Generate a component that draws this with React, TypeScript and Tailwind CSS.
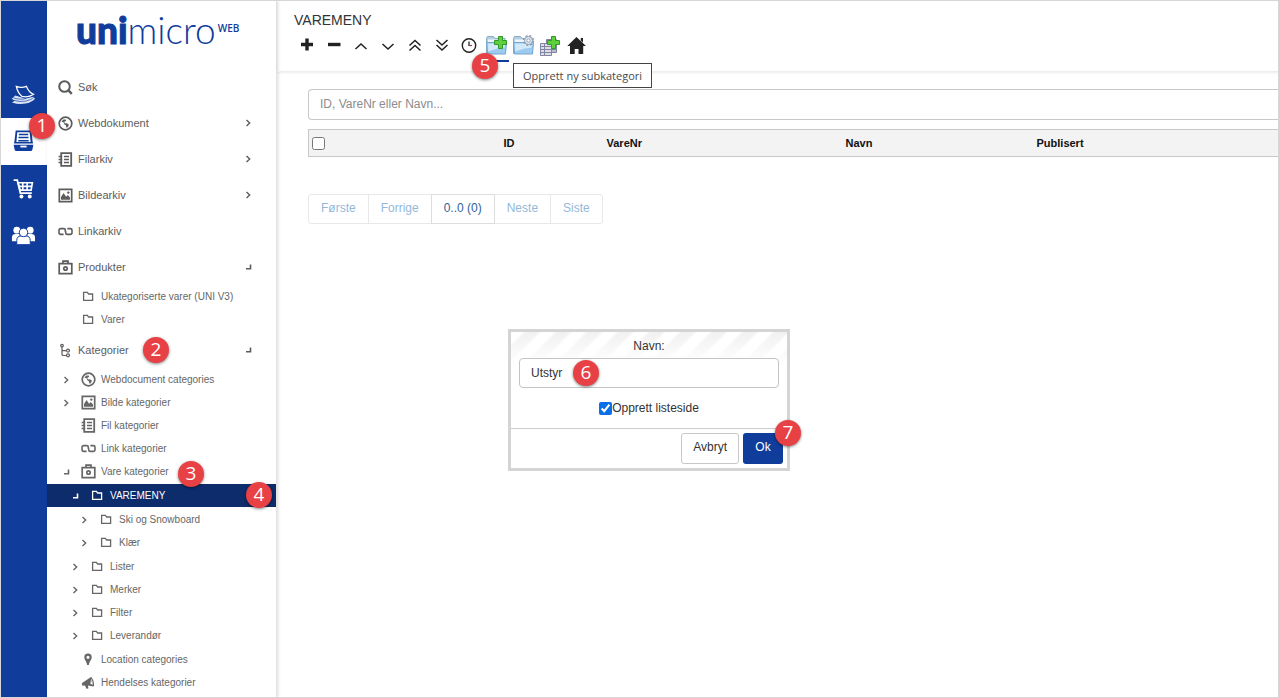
import type { ReactNode } from 'react';

type IconProps = { className?: string };

type TreeItem = {
  label: string;
  icon: (props: IconProps) => ReactNode;
  state?: 'open' | 'closed';
  selected?: boolean;
  children?: TreeItem[];
};

/* ---------- Icons ---------- */

const SearchIcon = ({ className }: IconProps) => (
  <svg viewBox="0 0 15 15" className={className} fill="none" stroke="currentColor" strokeWidth="2">
    <circle cx="6.5" cy="6.5" r="5.3" />
    <path d="M10.2 10.2l3.6 3.6" strokeWidth="2.4" />
  </svg>
);

const GlobeIcon = ({ className }: IconProps) => (
  <svg viewBox="0 0 15 15" className={className}>
    <circle cx="7.5" cy="7.5" r="6.3" fill="none" stroke="currentColor" strokeWidth="1.7" />
    <path d="M3.4 5.6L5.4 3.6l2.4 0 .3 1.3-1.500.6-.3 1.100 1.200.9 1.400-.2 1.900 1.200-.4 1.700-1.400 1.600-.8-.5-.2-1.800-1.700-1.200-.5-1.700-1.300-.5z" fill="currentColor" />
  </svg>
);

const NotebookIcon = ({ className }: IconProps) => (
  <svg viewBox="0 0 15 15" className={className} fill="none" stroke="currentColor">
    <path d="M3.2 1.2h10v12.6h-10z" strokeWidth="1.8" />
    <path d="M6 4.5h5M6 7.5h5M6 10.5h5" strokeWidth="1.5" />
    <path d="M.6 4.5h3.600M.6 7.5h3.600M.6 10.5h3.600" strokeWidth="1.4" />
  </svg>
);

const ImageIcon = ({ className }: IconProps) => (
  <svg viewBox="0 0 15 15" className={className}>
    <path d="M1.300 1.300h12.400v12.400H1.300z" fill="none" stroke="currentColor" strokeWidth="1.7" />
    <path d="M3 11.800V9l2.600-4 2.500 3.700 1.700-1.600L12 9.600v2.200z" fill="currentColor" />
    <circle cx="10.3" cy="4.6" r="1.2" fill="currentColor" />
  </svg>
);

const LinkIcon = ({ className }: IconProps) => (
  <svg viewBox="0 0 15 15" className={className} fill="none" stroke="currentColor" strokeWidth="1.6">
    <path d="M5.600 10.400H2.600A1.600 1.600 0 0 1 1 8.800V6.200A1.600 1.600 0 0 1 2.600 4.600h3.200a1.500 1.500 0 0 1 1.500 1.500v1.700" />
    <path d="M9.400 4.600h3A1.600 1.600 0 0 1 14 6.200v2.600a1.600 1.600 0 0 1-1.600 1.600H9.200a1.500 1.500 0 0 1-1.500-1.500V7.200" />
  </svg>
);

const ProductIcon = ({ className }: IconProps) => (
  <svg viewBox="0 0 15 15" className={className} fill="none" stroke="currentColor" strokeWidth="1.7">
    <path d="M1.200 3.600h12.600v10H1.200z" />
    <path d="M5 3.400V1.200h5v2.200" />
    <circle cx="7.5" cy="8.5" r="1.7" />
  </svg>
);

const BranchIcon = ({ className }: IconProps) => (
  <svg viewBox="0 0 15 15" className={className} fill="none" stroke="currentColor" strokeWidth="1.2">
    <circle cx="4" cy="2.6" r="1.3" />
    <path d="M4 4v7.200q0 1.300 1.300 1.300H8M4 7.600h4" />
    <circle cx="10" cy="7.6" r="1.5" />
    <circle cx="10" cy="12.3" r="1.5" />
  </svg>
);

const FolderIcon = ({ className }: IconProps) => (
  <svg viewBox="0 0 15 15" className={className} fill="none" stroke="currentColor" strokeWidth="1.3">
    <path d="M2.600 3.300h3.800l1.200 1.700h4v6.300h-9z" />
  </svg>
);

const PinIcon = ({ className }: IconProps) => (
  <svg viewBox="0 0 15 15" className={className}>
    <path fillRule="evenodd" fill="currentColor" d="M7 1.600a3.700 3.700 0 0 0-3.700 3.700c0 2.400 2.100 3.600 2.900 7.600h1.600c.8-4 2.900-5.200 2.900-7.600A3.700 3.700 0 0 0 7 1.600zm0 2.100a1.600 1.600 0 1 1 0 3.200 1.600 1.600 0 0 1 0-3.200z" />
  </svg>
);

const HornIcon = ({ className }: IconProps) => (
  <svg viewBox="0 0 15 15" className={className}>
    <path d="M.8 8.300L9.600 2.200l2.600 9.400-5.200-1 .4 3-2 .2L4 10.600l-2.600.2z" fill="currentColor" />
    <path d="M9.800 2.200q2.800 3.400 2.800 9" fill="none" stroke="currentColor" strokeWidth="1.1" />
    <path d="M10 4.600l1.400 4.800-2-.6z" fill="#fff" />
  </svg>
);

const Chevron = ({ state, className }: { state: 'open' | 'closed'; className?: string }) => (
  <svg viewBox="0 0 10 10" className={className} fill="none" stroke="currentColor">
    {state === 'open' ? (
      <path d="M7.500 2.500v4.300H3" strokeWidth="1.6" />
    ) : (
      <path d="M3.500 2l3.200 3-3.200 3" strokeWidth="1.4" />
    )}
  </svg>
);

const PapersIcon = ({ className }: IconProps) => (
  <svg viewBox="0 0 26 24" className={className}>
    <path d="M4.500 13L.8 16.500l3 2-2.800 1.700q7 2.500 14 1.200 6.500-1 10-5l-2-2-8 2z" fill="#dbe4f6" />
    <path d="M2.500 18q7 2.200 13 .8t8-3.600M2.500 15.500q8 2.500 13 .5" fill="none" stroke="#103c9b" strokeWidth=".7" />
    <path d="M5.500 3.600Q11 5.600 16 3.500q2.500 6.500 7.500 8.300-5 3.600-12 2.200-4.500-3.500-6-10.400z" fill="#103c9b" stroke="#fff" strokeWidth="1.3" />
  </svg>
);

const DrawerIcon = ({ className }: IconProps) => (
  <svg viewBox="0 0 24 24" className={className} fill="#103c9b">
    <path d="M4.500 1.500h15l1.300 11h-2L18 3H6L5.200 12.500h-2z" />
    <path d="M7.500 4.500h9v1.400h-9zM7.200 7.500h9.600v1.400H7.200zM7 10.500h10v1.400H7z" />
    <path d="M3 12.500h18v1.500H3zM2.500 15h19l-1 5q-.2 1-1.200 1H4.700q-1 0-1.200-1z" />
    <path d="M9 16h6v1.700H9z" fill="#fff" />
  </svg>
);

const CartIcon = ({ className }: IconProps) => (
  <svg viewBox="0 0 24 24" className={className} fill="none" stroke="#fff">
    <path d="M2.500 4H6l3 12.500h11" strokeWidth="1.7" />
    <path d="M6.800 6.500H20.500l-1.200 7H8.700z" strokeWidth="1.6" />
    <path d="M11.300 6v8M15.500 6v8M7 10h13" strokeWidth="1.6" />
    <circle cx="10" cy="19.6" r="1.900" fill="#fff" stroke="none" />
    <circle cx="18" cy="19.6" r="1.900" fill="#fff" stroke="none" />
  </svg>
);

const PeopleIcon = ({ className }: IconProps) => (
  <svg viewBox="0 0 26 24" className={className} fill="#fff">
    <circle cx="6" cy="6.5" r="3.5" />
    <circle cx="20" cy="6.5" r="3.5" />
    <path d="M1 18v-4q0-3.600 4-3.600h4V18zM25 18v-4q0-3.600-4-3.600h-4V18z" />
    <g stroke="#103c9b" strokeWidth="1">
      <path d="M6 21.500v-4.200Q6 12.500 10.500 12.500h5q4.500 0 4.500 4.800v4.200z" />
      <circle cx="13" cy="8.8" r="4.4" />
    </g>
  </svg>
);

const GreenPlus = ({ x, y }: { x: number; y: number }) => (
  <path
    transform={`translate(${x} ${y})`}
    d="M4.500 .5h4v4h4v4h-4v4h-4v-4h-4v-4h4z"
    fill="#5fd03c"
    stroke="#2f9a2a"
    strokeWidth="1"
  />
);

const BlueFolder = () => (
  <>
    <path d="M1.500 19.500v-15l1-2h6l1.500 2h10v15z" fill="#b4cfe2" stroke="#8aabc5" />
    <path d="M3 5.500h16v4H3z" fill="#eff6fb" stroke="none" />
    <path d="M1.500 8.500h20l-1 11.500h-18z" fill="#9dcbf0" stroke="#74a6cf" />
    <path d="M3 9.500h17l-.3 4q-8 .5-16.500 4z" fill="#d2e9fa" stroke="none" />
  </>
);

/* ---------- Data ---------- */

const menuItems: TreeItem[] = [
  { label: 'Webdokument', icon: GlobeIcon, state: 'closed' },
  { label: 'Filarkiv', icon: NotebookIcon, state: 'closed' },
  { label: 'Bildearkiv', icon: ImageIcon, state: 'closed' },
  { label: 'Linkarkiv', icon: LinkIcon },
  {
    label: 'Produkter',
    icon: ProductIcon,
    state: 'open',
    children: [
      { label: 'Ukategoriserte varer (UNI V3)', icon: FolderIcon },
      { label: 'Varer', icon: FolderIcon },
    ],
  },
  {
    label: 'Kategorier',
    icon: BranchIcon,
    state: 'open',
    children: [
      { label: 'Webdocument categories', icon: GlobeIcon, state: 'closed' },
      { label: 'Bilde kategorier', icon: ImageIcon, state: 'closed' },
      { label: 'Fil kategorier', icon: NotebookIcon },
      { label: 'Link kategorier', icon: LinkIcon },
      {
        label: 'Vare kategorier',
        icon: ProductIcon,
        state: 'open',
        children: [
          {
            label: 'VAREMENY',
            icon: FolderIcon,
            state: 'open',
            selected: true,
            children: [
              { label: 'Ski og Snowboard', icon: FolderIcon, state: 'closed' },
              { label: 'Klær', icon: FolderIcon, state: 'closed' },
            ],
          },
          { label: 'Lister', icon: FolderIcon, state: 'closed' },
          { label: 'Merker', icon: FolderIcon, state: 'closed' },
          { label: 'Filter', icon: FolderIcon, state: 'closed' },
          { label: 'Leverandør', icon: FolderIcon, state: 'closed' },
        ],
      },
      { label: 'Location categories', icon: PinIcon },
      { label: 'Hendelses kategorier', icon: HornIcon },
    ],
  },
];

const railItems = [
  { label: 'Dokumenter', icon: PapersIcon },
  { label: 'Arkiv', icon: DrawerIcon, active: true },
  { label: 'Nettbutikk', icon: CartIcon },
  { label: 'Brukere', icon: PeopleIcon },
];

const toolbar: { label: string; active?: boolean; drawing: ReactNode }[] = [
  { label: 'Ny', drawing: <path d="M11 4.500v12M5 10.500h12" strokeWidth="3.4" /> },
  { label: 'Slett', drawing: <path d="M5 10.500h12.500" strokeWidth="3.4" /> },
  { label: 'Opp', drawing: <path d="M5.500 15l5.500-5 5.500 5" strokeWidth="1.5" /> },
  { label: 'Ned', drawing: <path d="M5.500 10l5.500 5 5.500-5" strokeWidth="1.5" /> },
  { label: 'Øverst', drawing: <path d="M5.500 11.500l5.500-5 5.500 5M5.500 16.500l5.500-5 5.500 5" strokeWidth="1.5" /> },
  { label: 'Nederst', drawing: <path d="M5.500 6l5.500 5 5.500-5M5.500 11l5.500 5 5.500-5" strokeWidth="1.5" /> },
  {
    label: 'Historikk',
    drawing: (
      <>
        <circle cx="11" cy="11.5" r="6.7" strokeWidth="1.4" />
        <path d="M11 7.500V12" strokeWidth="1.3" />
        <path d="M11 11.500h3" stroke="#a33b45" strokeWidth="1.2" />
      </>
    ),
  },
  {
    label: 'Opprett ny subkategori',
    active: true,
    drawing: (
      <>
        <BlueFolder />
        <GreenPlus x={9} y={2} />
      </>
    ),
  },
  {
    label: 'Innstillinger',
    drawing: (
      <>
        <BlueFolder />
        <circle cx="16.5" cy="6.5" r="4.8" stroke="#8d9cae" strokeWidth="1.6" strokeDasharray="2 1.800" />
        <circle cx="16.5" cy="6.5" r="4" fill="#e4eaf0" stroke="#8d9cae" strokeWidth="1" />
        <circle cx="16.5" cy="6.5" r="1.7" fill="#fff" stroke="#8fa2b6" strokeWidth="1" />
      </>
    ),
  },
  {
    label: 'Legg til flere',
    drawing: (
      <>
        <path d="M7.500 5.500h10v13h-10z" fill="#b9bccb" stroke="#8085a0" />
        <path d="M1.500 9.500h11v12h-11z" fill="#dcdde8" stroke="#8085a0" />
        <path d="M1.500 12.500h11M1.500 15.500h11M1.500 18.500h11M5.500 9.500v12M13 15.500h4.500" stroke="#8085a0" />
        <GreenPlus x={8} y={2} />
      </>
    ),
  },
  {
    label: 'Hjem',
    drawing: <path d="M10.500 3L20 12h-2.800v8h-4.700v-5H8.700v5H4v-8H1.300zM14.800 4h2.200v4.500l-2.200-2z" fill="#222" stroke="none" />,
  },
];

const badges = [
  { n: 1, pos: 'left-[28px] top-[112px]' },
  { n: 2, pos: 'left-[142px] top-[336px]' },
  { n: 3, pos: 'left-[177px] top-[460px]' },
  { n: 4, pos: 'left-[245px] top-[481px]' },
  { n: 5, pos: 'left-[471px] top-[52px]' },
  { n: 6, pos: 'left-[572px] top-[359px]' },
  { n: 7, pos: 'left-[774px] top-[419px]' },
];

const pages = ['Første', 'Forrige', '0..0 (0)', 'Neste', 'Siste'];

const depthPadding = ['pl-[14px]', 'pl-[23px]', 'pl-8'];

/* ---------- Parts ---------- */

function Tree({ items, depth = 0 }: { items: TreeItem[]; depth?: number }) {
  return (
    <ul className={depth === 0 ? 'pb-px' : 'py-px'}>
      {items.map(({ label, icon: Icon, state, selected, children }) => (
        <li key={label}>
          <a
            href="#"
            className={`flex h-[23px] items-center text-[10px] ${depthPadding[depth]} ${
              selected ? 'bg-[#0d2c6c] text-white' : 'text-[#666]'
            }`}
          >
            <span className="mr-[10px] w-[10px]">
              {state && <Chevron state={state} className="size-[10px]" />}
            </span>
            <Icon className="mr-[5px] size-[15px]" />
            {label}
          </a>
          {children && <Tree items={children} depth={depth + 1} />}
        </li>
      ))}
    </ul>
  );
}

function Sidebar() {
  return (
    <nav className="w-[230px] shrink-0 border-r border-[#e4e4e4] shadow-[1px_0_3px_rgba(0,0,0,0.15)]">
      <div className="flex h-[68px] items-start pl-[29px] pt-[6px] font-['Lato'] text-[37px] leading-[46px] text-[#103c9b]">
        <span className="font-black [-webkit-text-stroke:1px_#103c9b]">uni</span>
        <span className="font-light">micro</span>
        <span className="pl-[2px] pt-[15px] font-['Open_Sans'] text-[10px] font-semibold leading-[12px]">WEB</span>
      </div>
      <label className="flex h-9 items-center gap-[5px] pl-[11px] text-[11px] text-[#5c5c5c]">
        <SearchIcon className="size-[15px]" />
        <input
          type="text"
          placeholder="Søk"
          className="w-40 bg-transparent outline-none placeholder:text-[#5c5c5c]"
        />
      </label>
      <ul>
        {menuItems.map(({ label, icon: Icon, state, children }) => (
          <li key={label}>
            <a href="#" className="flex h-9 items-center gap-[5px] pl-[11px] pr-[23px] text-[11px] text-[#5c5c5c]">
              <Icon className="size-[15px]" />
              <span className="grow">{label}</span>
              {state && <Chevron state={state} className="size-[10px]" />}
            </a>
            {children && <Tree items={children} />}
          </li>
        ))}
      </ul>
    </nav>
  );
}

function CreateDialog() {
  return (
    <form
      role="dialog"
      className="absolute left-[507px] top-[328px] w-[282px] border-[3px] border-[#d4d4d4] bg-white text-[12px] text-[#333]"
    >
      <div className="bg-[linear-gradient(to_bottom,transparent,#fff_32px),repeating-linear-gradient(135deg,#fff_0_8px,#f1f1f1_11px_19px,#fff_22px)] px-2">
        <label htmlFor="navn" className="block h-[26px] text-center leading-[28px]">
          Navn:
        </label>
        <input
          id="navn"
          type="text"
          defaultValue="Utstyr"
          className="block h-[30px] w-full rounded-[4px] border border-[#c4c4c4] bg-white px-[11px] outline-none"
        />
      </div>
      <div className="flex h-10 items-center justify-center">
        <input id="listeside" type="checkbox" defaultChecked className="size-[13px] accent-[#0b6fe8]" />
        <label htmlFor="listeside">Opprett listeside</label>
      </div>
      <div className="flex justify-end gap-1 border-t border-[#ccc] px-1 py-1">
        <button type="button" className="h-[31px] rounded-[3px] border border-[#c8c8c8] px-[11px] pb-1">
          Avbryt
        </button>
        <button type="submit" className="h-[31px] w-10 rounded-[3px] bg-[#103c9b] pb-1 text-white">
          Ok
        </button>
      </div>
    </form>
  );
}

export default function App() {
  return (
    <div className="relative flex min-h-screen overflow-hidden border border-[#d6d6d6] bg-white font-['Liberation_Sans',Arial,sans-serif]">
      {/* Module rail */}
      <div className="w-[46px] shrink-0 bg-[#103c9b] pt-[70px]">
        {railItems.map(({ label, icon: Icon, active }) => (
          <a
            key={label}
            href="#"
            aria-label={label}
            className={`flex h-[47px] items-center justify-center pr-[2px] ${active ? 'bg-white' : ''}`}
          >
            <Icon className="size-[25px]" />
          </a>
        ))}
      </div>

      <Sidebar />

      {/* Content */}
      <main className="min-w-0 grow">
        <header className="h-[71px] border-b border-[#eee] pl-[17px] pt-[10px] shadow-[0_1px_2px_rgba(0,0,0,0.08)]">
          <h1 className="text-[14px] leading-[18px] text-[#333]">VAREMENY</h1>
          <div className="-ml-px flex h-[33px]">
            {toolbar.map(({ label, active, drawing }) => (
              <button
                key={label}
                type="button"
                aria-label={label}
                className={`flex w-[27px] items-center justify-center border-b-2 ${
                  active ? 'border-[#103c9b]' : 'border-transparent'
                }`}
              >
                <svg viewBox="0 0 22 22" className="size-[22px]" fill="none" stroke="#222">
                  {drawing}
                </svg>
              </button>
            ))}
          </div>
        </header>

        <div className="pl-[31px] pt-[17px]">
          <input
            type="text"
            aria-label="Søk i varer"
            placeholder="ID, VareNr eller Navn..."
            className="block h-[31px] w-full rounded-l-[4px] border border-r-0 border-[#c8c8c8] px-[11px] pb-[2px] text-[12px] outline-none placeholder:text-[#8c8c8c]"
          />
          <table className="mt-[9px] w-full table-fixed border border-r-0 border-[#c8c8c8] bg-[#f3f3f3] text-left text-[11px] text-[#111]">
            <thead>
              <tr className="h-[27px]">
                <th className="w-[195px] pl-[3px]">
                  <input type="checkbox" aria-label="Velg alle" className="block size-[13px]" />
                </th>
                <th className="w-[103px]">ID</th>
                <th className="w-[239px]">VareNr</th>
                <th className="w-[191px]">Navn</th>
                <th>Publisert</th>
              </tr>
            </thead>
          </table>

          <div className="mt-[37px] flex text-[12px]">
            {pages.map((page) => (
              <button
                key={page}
                type="button"
                className={`-mr-px h-[30px] border px-3 pb-[2px] first:rounded-l-[3px] last:rounded-r-[3px] ${
                  page === '0..0 (0)'
                    ? 'relative border-[#ddd] text-[#2f6299]'
                    : 'border-[#e8e8e8] text-[#94b8da]'
                }`}
              >
                {page}
              </button>
            ))}
          </div>
        </div>
      </main>

      <div
        role="tooltip"
        className="absolute left-[512px] top-[62px] border border-[#444] bg-white px-[9px] font-['Open_Sans'] text-[11px] leading-[23px] text-[#4a4a4a]"
      >
        Opprett ny subkategori
      </div>

      <CreateDialog />

      {/* Step markers */}
      {badges.map(({ n, pos }) => (
        <span
          key={n}
          className={`absolute flex size-[26px] items-center justify-center rounded-full bg-[#e84145] pb-[2px] font-['Open_Sans'] text-[19px] leading-none text-white shadow-[0_1px_3px_rgba(0,0,0,0.5)] ${pos}`}
        >
          {n}
        </span>
      ))}
    </div>
  );
}
